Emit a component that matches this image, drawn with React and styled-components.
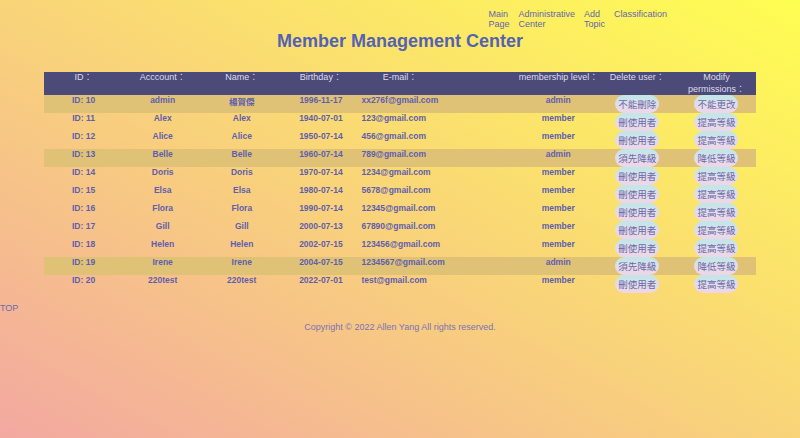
import styled, { createGlobalStyle } from 'styled-components';

const GlobalStyle = createGlobalStyle`
    html, body {
        margin: 0;
        padding: 0;
    }
    body {
        min-height: 100vh;
        background: linear-gradient(to top right, #f3a8a1 0%, #f9d479 50%, #fffe52 100%);
        font-family: "Liberation Sans", Arial, "Noto Sans CJK TC", sans-serif;
    }
`;

const Page = styled.div`
    min-height: 100vh;
    display: flex;
    flex-direction: column;
`;

const Nav = styled.nav`
    display: flex;
    justify-content: flex-end;
    gap: 9px;
    padding: 9px 133px 0 0;
`;

const NavLink = styled.a`
    width: min-content;
    font-size: 9px;
    line-height: 10px;
    color: #6467a9;
    text-decoration: none;
    cursor: pointer;
`;

const Title = styled.h1`
    margin: 2px 0 0;
    text-align: center;
    font-size: 18px;
    line-height: 21px;
    font-weight: bold;
    color: #5462b4;
`;

const Table = styled.table`
    width: 712px;
    margin: 20px auto 0;
    border-collapse: collapse;
    table-layout: fixed;
`;

const HeadCell = styled.th`
    height: 22px;
    padding: 0;
    vertical-align: top;
    background: #4b4a79;
    color: #dedcec;
    font-size: 9px;
    line-height: 11.5px;
    font-weight: normal;
    text-align: center;
    white-space: ${p => (p.$wrap ? 'normal' : 'nowrap')};
`;

const Row = styled.tr`
    height: 18px;
    background: ${p => (p.$admin ? '#dfc276' : 'transparent')};
`;

const Cell = styled.td`
    padding: 0 0 0 ${p => (p.$left ? '1px' : '0')};
    vertical-align: top;
    text-align: ${p => (p.$left ? 'left' : 'center')};
    font-size: 8.5px;
    font-weight: bold;
    color: #5f5fae;
    white-space: nowrap;
`;

const Pill = styled.button`
    display: inline-block;
    vertical-align: top;
    height: 18px;
    padding: 0 3px;
    border: none;
    border-radius: 9px;
    background: linear-gradient(to bottom, #bde8e8 0%, #e4dcea 55%, #efd6e6 100%);
    color: #6a6aa8;
    font-family: "Noto Sans CJK TC", sans-serif;
    font-size: 9.5px;
    line-height: 18px;
    cursor: pointer;
`;

const TopLink = styled.a`
    display: block;
    margin-top: 10px;
    font-size: 9px;
    line-height: 10px;
    color: #6a6ab0;
    text-decoration: none;
`;

const Footer = styled.footer`
    margin-top: 9px;
    text-align: center;
    font-size: 9px;
    line-height: 10px;
    color: #7a74b2;
`;

const headers = ['ID：', 'Acccount：', 'Name：', 'Birthday：', 'E-mail：', '', 'membership level：', 'Delete user：', 'Modify permissions：'];

const members = [
    [10, 'admin', '楊賀傑', '1996-11-17', 'xx276f@gmail.com', 'admin'],
    [11, 'Alex', 'Alex', '1940-07-01', '123@gmail.com', 'member'],
    [12, 'Alice', 'Alice', '1950-07-14', '456@gmail.com', 'member'],
    [13, 'Belle', 'Belle', '1960-07-14', '789@gmail.com', 'admin'],
    [14, 'Doris', 'Doris', '1970-07-14', '1234@gmail.com', 'member'],
    [15, 'Elsa', 'Elsa', '1980-07-14', '5678@gmail.com', 'member'],
    [16, 'Flora', 'Flora', '1990-07-14', '12345@gmail.com', 'member'],
    [17, 'Gill', 'Gill', '2000-07-13', '67890@gmail.com', 'member'],
    [18, 'Helen', 'Helen', '2002-07-15', '123456@gmail.com', 'member'],
    [19, 'Irene', 'Irene', '2004-07-15', '1234567@gmail.com', 'admin'],
    [20, '220test', '220test', '2022-07-01', 'test@gmail.com', 'member'],
];

// the first admin is the owner and can't be touched
const actions = (id, level) => {
    if (id === 10) return ['不能刪除', '不能更改'];
    if (level === 'admin') return ['須先降級', '降低等級'];
    return ['刪使用者', '提高等級'];
};

const App = () => (
    <Page>
        <GlobalStyle />
        <Nav>
            <NavLink>Main Page</NavLink>
            <NavLink>Administrative Center</NavLink>
            <NavLink>Add Topic</NavLink>
            <NavLink>Classification</NavLink>
        </Nav>
        <Title>Member Management Center</Title>
        <Table>
            <thead>
                <tr>
                    {headers.map((h, i) => (
                        <HeadCell key={i} $wrap={i === headers.length - 1}>{h}</HeadCell>
                    ))}
                </tr>
            </thead>
            <tbody>
                {members.map(([id, account, name, birthday, email, level]) => {
                    const [del, modify] = actions(id, level);
                    return (
                        <Row key={id} $admin={level === 'admin'}>
                            <Cell>ID: {id}</Cell>
                            <Cell>{account}</Cell>
                            <Cell>{name}</Cell>
                            <Cell>{birthday}</Cell>
                            <Cell $left>{email}</Cell>
                            <Cell />
                            <Cell>{level}</Cell>
                            <Cell><Pill>{del}</Pill></Cell>
                            <Cell><Pill>{modify}</Pill></Cell>
                        </Row>
                    );
                })}
            </tbody>
        </Table>
        <TopLink>TOP</TopLink>
        <Footer>Copyright © 2022 Allen Yang All rights reserved.</Footer>
    </Page>
);

export default App;
